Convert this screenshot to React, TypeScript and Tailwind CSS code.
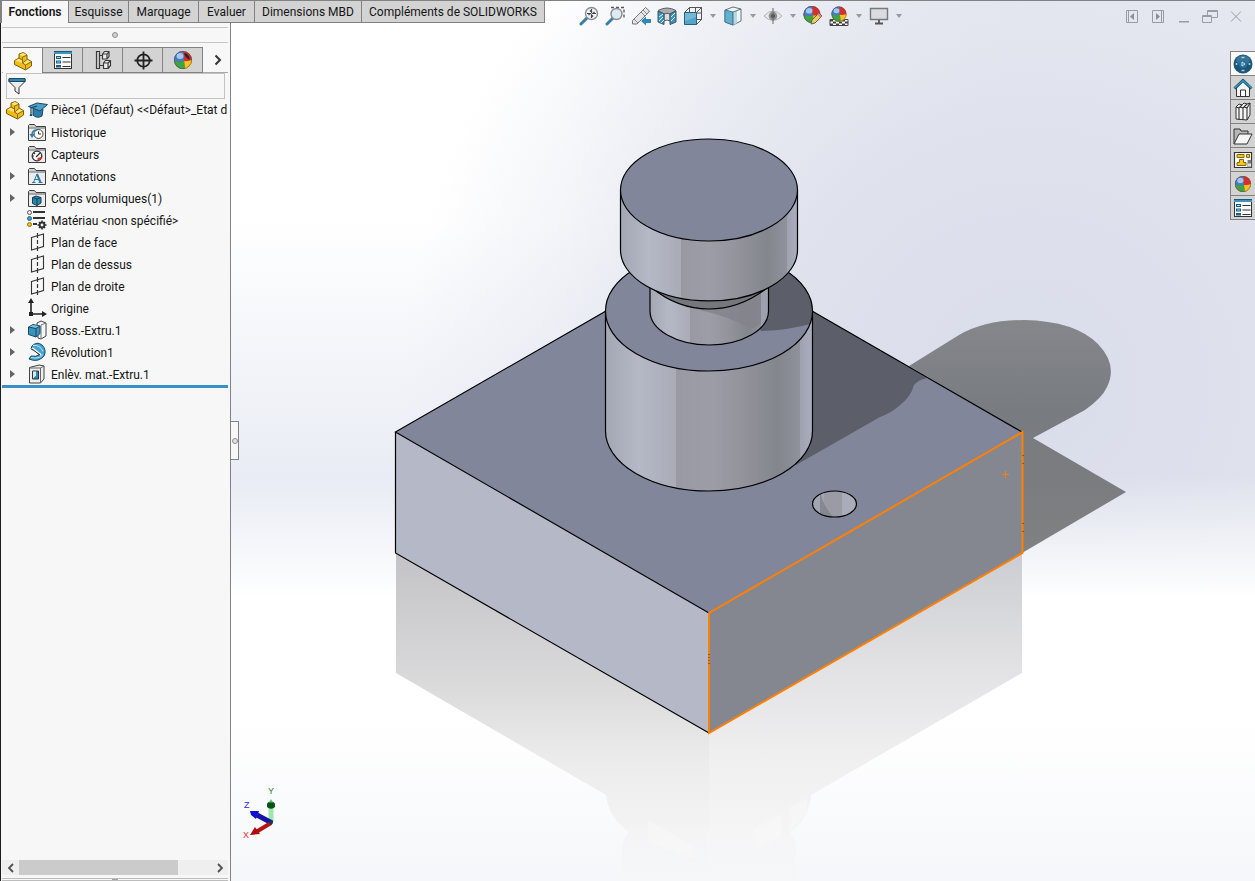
import type { ReactNode } from 'react';

/* ---------- icons ---------- */

function Svg({ size = 20, children }: { size?: number; children: ReactNode }) {
  return (
    <svg width={size} height={size} viewBox="0 0 20 20" fill="none" aria-hidden="true" className="block shrink-0">
      {children}
    </svg>
  );
}

const PartIcon = () => (
  <Svg>
    <path d="M1.500 9.500 6 7V3l4.500-1.500L14 4v4l4.500 2.500V15L12.500 19 1.500 13.500z" fill="#f0bb17" stroke="#7d5f0a" strokeLinejoin="round" />
    <path d="M6.500 3.300 10.500 2l3 2L9.500 5.800zM2.300 9.600 6 7.800l3.500 1.700v2.800zM10 11.800l4-3 4 2-5.500 3z" fill="#ffe371" />
    <path d="M9.500 6v6l3 2v4.500M9.500 6 14 4.200M9.500 12 14 8.500M12.500 14l6-3.300M6 7l3.500 2" stroke="#8b6a10" />
  </Svg>
);

const ListIcon = () => (
  <Svg>
    <rect x="1.500" y="1.500" width="17" height="17" fill="#fafafa" stroke="#333" />
    <path d="M1 1h18v3H1z" fill="#3b94bd" />
    <path d="M1 1.500h18" stroke="#1c5878" />
    <path d="M3 6h5v3H3zM3 10.500h5v3H3zM3 15h5v2.500H3z" fill="#175f85" />
    <path d="M4 7.500h3M4 12h3" stroke="#9fd6ee" />
    <path d="M9.500 7.500h8M9.500 12h8M9.500 16.500h8" stroke="#333" strokeWidth="1.200" />
  </Svg>
);

const ConfigIcon = () => (
  <Svg>
    <path d="M3.500 1.500h3v17h-3zM7 5.500h3M7 15.500h3" stroke="#3a3a3a" strokeWidth="1.200" />
    <path d="M9.500 4l2-2.500h4.500v5L14 9H9.500zM9.500 4H14v5M14 4l2-2.500M10.500 13l2-2.500h5v5L15 18.500h-4.500zM10.500 13H15v5.500M15 13l2.500-2.500" fill="#eee" stroke="#3a3a3a" strokeWidth="1.200" strokeLinejoin="round" />
  </Svg>
);

const TargetIcon = () => (
  <Svg>
    <circle cx="10.500" cy="10.500" r="6.200" stroke="#222" strokeWidth="1.800" />
    <path d="M10.500 1.500v18M1.500 10.500h18" stroke="#222" strokeWidth="1.800" />
  </Svg>
);

function Ball({ cx = 10, cy = 10, r = 9 }: { cx?: number; cy?: number; r?: number }) {
  const k = r / 9;
  return (
    <g transform={`translate(${cx} ${cy}) scale(${k})`}>
      <circle r="9" fill="#d92f2a" />
      <path d="M0-9A9 9 0 0 0-9 1Q-4 2 1 1Q1-5 0-9z" fill="#3f7fd0" />
      <path d="M-9 1A9 9 0 0 0 2 8.800Q2 4 1 1Q-4 2-9 1z" fill="#3fa544" />
      <path d="M2 8.800A9 9 0 0 0 9 0Q5 1.500 1 1Q2 4 2 8.800z" fill="#f2c522" />
      <ellipse cx="-3" cy="-4" rx="3.500" ry="3" fill="#fff" opacity=".55" />
      <circle r="8.600" stroke="#444" strokeWidth=".8" fill="none" opacity=".6" />
    </g>
  );
}

const AppearanceIcon = () => (
  <Svg>
    <Ball />
    <path d="M11 3q5 0 6 7-5-2-6-7z" fill="#26262b" />
  </Svg>
);
const BallIcon = () => (
  <Svg>
    <Ball r={8} />
  </Svg>
);

const FilterIcon = () => (
  <Svg>
    <path d="M2 3h16v2.500l-6 6V18l-4-3v-3.500l-6-6z" fill="#ececec" stroke="#333" strokeLinejoin="round" />
    <path d="M2 2.500h16v3H2z" fill="#2a8ab5" stroke="#1c4a60" />
  </Svg>
);

const CapIcon = () => (
  <Svg>
    <path d="M5 9v6q4 4 9 1l1-7" fill="#2f7ea8" stroke="#174a66" />
    <path d="M.5 6.500 9 3l10.500 1.500L12 11z" fill="#4d9dc4" stroke="#174a66" strokeLinejoin="round" />
    <path d="M9 6 3 8v5" stroke="#174a66" strokeWidth="1.200" />
    <path d="M3 12l-1.500 4h3z" fill="#174a66" />
  </Svg>
);

function Folder({ children }: { children: ReactNode }) {
  return (
    <Svg>
      <path d="M1.500 18.500v-15l1-1h5l1.500 2h9.500v14z" fill="#d2d2d2" stroke="#3d3d3d" />
      <path d="M2 6.500h16v11.500H2z" fill="#ececec" />
      <path d="M2 6h16.500" stroke="#777" />
      {children}
    </Svg>
  );
}
const HistoryIcon = () => (
  <Folder>
    <circle cx="11.500" cy="12" r="4.500" stroke="#444" fill="#fff" />
    <path d="M11.500 9.500V12H14" stroke="#333" />
    <path d="M5 13q0-5 5-5" stroke="#2582ad" strokeWidth="1.600" />
    <path d="M2.500 12h5.500l-3 4z" fill="#2582ad" />
  </Folder>
);
const SensorIcon = () => (
  <Folder>
    <circle cx="10" cy="12" r="4.800" stroke="#333" strokeWidth="1.300" fill="#fff" />
    <path d="M14.500 13a5 5 0 0 1-4 4l0-3z" fill="#d93320" />
    <path d="M9 13l4-4M7 9l1 1M6 12h1" stroke="#333" strokeWidth="1.200" />
  </Folder>
);
const AnnotationIcon = () => (
  <Folder>
    <path d="M6.500 16.500 10 8" stroke="#2b7ca5" />
    <path d="M10 8l3.500 8.500" stroke="#2b7ca5" strokeWidth="2" />
    <path d="M7.500 13.500h4.500M5 16.500h3.500M11.500 16.500h4" stroke="#2b7ca5" />
  </Folder>
);
const BodyIcon = () => (
  <Folder>
    <path d="M5.500 9.500 9 8l5 1.500v5.500L10 17.500l-4.500-2z" fill="#2b86af" stroke="#123f57" strokeLinejoin="round" />
    <path d="M5.500 9.500 10 11l4-1.500M10 11v6.500" stroke="#123f57" />
  </Folder>
);
const MaterialIcon = () => (
  <Svg>
    <path d="M6 2h12M6 8h12M6 14h4" stroke="#333" strokeWidth="2" />
    <circle cx="2.500" cy="2.500" r="2" fill="#eee" stroke="#555" />
    <circle cx="2.500" cy="8.500" r="2" fill="#3ba0cf" stroke="#2a6584" />
    <circle cx="2.500" cy="14.500" r="2" fill="#f5c21c" stroke="#8e6f10" />
    <path d="M15 10.500v9M10.500 15h9M12 12l6 6M18 12l-6 6" stroke="#333" strokeWidth="1.600" />
    <circle cx="15" cy="15" r="2.400" fill="#f7f7f7" stroke="#333" strokeWidth="2" />
  </Svg>
);
const PlaneIcon = () => (
  <Svg>
    <path d="M4.500 5.500 16.500 2v12.500L4.500 18z" stroke="#333" strokeWidth="1.100" />
    <path d="M10.500 1v5M10.500 8v4M10.500 14v5" stroke="#333" strokeWidth="1.200" />
  </Svg>
);
const OriginIcon = () => (
  <Svg>
    <path d="M4 16V3M4 16h12" stroke="#222" strokeWidth="1.600" />
    <path d="M4 0l3 5H1zM20 16l-5-3v6zM2 14h4v4H2z" fill="#222" />
  </Svg>
);
const BossIcon = () => (
  <Svg>
    <path d="M10 3l4-2 5 2v13l-5 3-3-1z" fill="#f5f5f5" stroke="#444" strokeLinejoin="round" />
    <path d="M14 5v14M14 5l5-2" stroke="#777" />
    <path d="M1.500 7 6 4.500l7 1.500v7.500L9 17l-7.500-2.500z" fill="#3b94bd" stroke="#184a62" strokeLinejoin="round" />
    <path d="M2 7l4-2 6.500 1.200L9 8.500z" fill="#7cc3e0" />
    <path d="M1.500 7 9 8.500 13 6M9 8.500V17" stroke="#184a62" />
  </Svg>
);
const RevolveIcon = () => (
  <Svg>
    <path d="M5 4Q10-1 15 3q5 5 2 11-6 7-15 3l2-3q5 1 8-1-2-4-8-6z" fill="#45a4d0" stroke="#184a62" strokeLinejoin="round" />
    <path d="M6 3.500q7-1 10 6M4 15.500q8 2 12-3" stroke="#b3e3f6" />
    <path d="M5 6l9 7" stroke="#fff" strokeWidth="2" />
    <path d="M5 7l8 6" stroke="#222" />
  </Svg>
);
const CutIcon = () => (
  <Svg>
    <path d="M2.500 3.500 12 1l5 1v13l-3.500 4h-11z" fill="#eee" stroke="#444" strokeLinejoin="round" />
    <path d="M2.500 4h11v15M13.500 4 17 2" stroke="#666" />
    <path d="M5.500 7h6v8h-6z" fill="#2f88b2" stroke="#333" />
    <path d="M6 7.500h3v4L6 14.500z" fill="#cfeefa" />
  </Svg>
);

/* head-up toolbar */
const ZoomFit = () => (
  <Svg>
    <path d="M2 18l6-6" stroke="#3a80a5" strokeWidth="3" strokeLinecap="round" />
    <circle cx="12.500" cy="7.500" r="6" fill="#f1f3f5" stroke="#8a8d92" strokeWidth="1.400" />
    <path d="M12.500 3v3l-1.500-1.500M12.500 12V9l1.500 1.500M8 7.500h3L9.500 9M17 7.500h-3L15.500 6" stroke="#444" strokeWidth="1.200" />
  </Svg>
);
const ZoomArea = () => (
  <Svg>
    <path d="M6 1.500h13v11" stroke="#555" strokeWidth="1.300" strokeDasharray="3 2" />
    <path d="M2 18l6-6" stroke="#3a80a5" strokeWidth="3" strokeLinecap="round" />
    <circle cx="11.500" cy="8" r="5.500" fill="#dceaf1" stroke="#8a8d92" strokeWidth="1.400" />
  </Svg>
);
const PreviousView = () => (
  <Svg>
    <path d="M1.500 14.500 12 4l2.500-2.500L18.500 5 16 8 6 18H1.500z" fill="#e6e6e6" stroke="#777" strokeLinejoin="round" />
    <path d="M3 13l4 4M10 6l4 4M12 4l4 4" stroke="#888" />
    <path d="M10 15l5-4.500V13h5v4h-5v2.500z" fill="#3388b3" />
  </Svg>
);
const SectionView = () => (
  <Svg>
    <path d="M1 4.500q9-5 18 0L13 8q-3-1.500-6 0z" fill="#a9adb1" stroke="#5c6064" />
    <path d="M7 8q3-1.500 6 0v7q-3-2-6 0z" fill="#dcdee0" stroke="#5c6064" />
    <path d="M1 5l6 3v10.500L1 16zM13 8l6-3v11l-6 2.500z" fill="#3b94bd" stroke="#44555f" />
    <path d="M2 11l4-3M2 15l4-4M4 17l3-3M14 11l4-4M14 15l4-4" stroke="#d8f1fb" />
  </Svg>
);
const Orientation = () => (
  <Svg>
    <path d="M1.500 6.500l5-5h12v12l-5 5M6.500 1.500v12h12M12.500 1.500v12M6.500 7h12M13.500 6.500l5-5M13.500 18.500l5-5" stroke="#555" />
    <path d="M1.500 6.500h12v12h-12z" fill="#55a3c7" stroke="#25607d" />
    <path d="M2 7h11v4L2 15z" fill="#8bc5dd" opacity=".6" />
  </Svg>
);
const DisplayStyle = () => (
  <Svg>
    <path d="M2 4l8-3 8 2v12l-8 4-8-3z" fill="#eef6f9" stroke="#647079" strokeLinejoin="round" />
    <path d="M2 4l8 2v13l-8-3z" fill="#62b0d2" stroke="#49798f" />
    <path d="M10 6l4-1.500V17l-4 2z" fill="#b0d9e9" />
    <path d="M10 6l8-3M10 6v13" stroke="#647079" />
  </Svg>
);
const EyeIcon = () => (
  <Svg>
    <path d="M1 10q9-10 18 0-9 9-18 0z" fill="#e9e9ea" stroke="#b0b0b3" />
    <circle cx="10" cy="10" r="4.300" fill="#8c8e92" />
    <circle cx="10" cy="10" r="2" fill="#4d4f52" />
    <path d="M10 2v16" stroke="#666" />
  </Svg>
);
const EditAppearance = () => (
  <Svg>
    <Ball cx={9} cy={8.500} r={8.500} />
    <path d="M8 18l1-4 7-7 3 3-7 7z" fill="#f1cd58" stroke="#5d5d5d" strokeLinejoin="round" />
    <path d="M15 8l3 3" stroke="#e3867e" strokeWidth="2" />
  </Svg>
);
const SceneIcon = () => (
  <Svg>
    <path d="M1 13.500h18v6H1z" fill="#fff" stroke="#444" />
    <path d="M1 13.500h3v2H1zM7 13.500h3v2H7zM13 13.500h3v2h-3zM4 15.500h3v2H4zM10 15.500h3v2h-3zM16 15.500h3v2h-3zM1 17.500h3v2H1zM7 17.500h3v2H7zM13 17.500h3v2h-3z" fill="#444" />
    <Ball cy={8} r={7.500} />
  </Svg>
);
const MonitorIcon = () => (
  <Svg>
    <path d="M1.500 2.500h17v11h-17z" fill="#d9dbdf" stroke="#75787c" strokeWidth="1.400" />
    <path d="M10 14v3M6 17.500h8" stroke="#555" strokeWidth="1.800" />
  </Svg>
);

/* task pane */
const ResourcesIcon = () => (
  <Svg>
    <circle cx="10" cy="10" r="9.500" fill="#1b5578" />
    <ellipse cx="10" cy="6" rx="7" ry="4.500" fill="#4b87aa" opacity=".6" />
    <circle cx="10" cy="10" r="4" fill="#2d7099" />
    <path d="M9 8l3 2-3 2z" stroke="#b8e0f4" />
    <path d="M8.500 3.500h3M3.500 9v2M16.500 9v2M8.500 16.500h3" stroke="#a9cee0" strokeWidth="1.600" />
  </Svg>
);
const HomeIcon = () => (
  <Svg>
    <path d="M3.500 9v9.500h13V9L10 3z" fill="#f4f4f4" stroke="#333" />
    <path d="M7.500 18v-6h5v6" fill="#fff" stroke="#333" />
    <path d="M1.500 10.500 10 2.500l8.500 8" stroke="#14516f" strokeWidth="3" />
    <path d="M1.500 10 10 2.500l8.500 7.500" stroke="#3a9bc7" strokeWidth="1.200" />
  </Svg>
);
const LibraryIcon = () => (
  <Svg>
    <path d="M3 5l3-3 3 1 2-2 3 1 3-1v12l-3 5-11-1z" fill="#f5f5f5" stroke="#333" strokeLinejoin="round" />
    <path d="M3 5l3 1v12M6 6l3-3M7 5l3 1v12M10 6l4-4M11 5l3 1v12M14 6l3-5" stroke="#333" strokeWidth="1.100" />
  </Svg>
);
const OpenFolderIcon = () => (
  <Svg>
    <path d="M1 18V3h6l1 2h7v3" fill="#b7b7b7" stroke="#333" />
    <path d="M1 18 6 8h13l-5 10z" fill="#f5f5f5" stroke="#333" strokeLinejoin="round" />
  </Svg>
);
const PaletteIcon = () => (
  <Svg>
    <path d="M1.500 2.500h17v15h-17z" fill="#fff" stroke="#333" strokeWidth="1.200" />
    <path d="M4 4.500h7v3H4zM13.500 4.500h3v3h-3zM6.500 9.500h4v3H13v3H4v-3h2.500z" fill="#f4c726" stroke="#86660a" />
    <path d="M14.500 10v7.500h4V10z" fill="#777" />
    <path d="M15 13.500h3v3h-3z" fill="#ddd" />
  </Svg>
);

const Caret = () => <span className="h-0 w-0 border-x-[3px] border-t-[4px] border-x-transparent border-t-[#97999d]" />;

/* ---------- data ---------- */

const commandTabs = [
  { label: 'Fonctions', width: 'w-[67px]' },
  { label: 'Esquisse', width: 'w-[60px]' },
  { label: 'Marquage', width: 'w-[70px]' },
  { label: 'Evaluer', width: 'w-[56px]' },
  { label: 'Dimensions MBD', width: 'w-[107px]' },
  { label: 'Compléments de SOLIDWORKS', width: 'w-[183px]' },
];

const managerTabs = [
  { label: 'Arbre de création', icon: <PartIcon /> },
  { label: 'Propriétés', icon: <ListIcon /> },
  { label: 'Configurations', icon: <ConfigIcon /> },
  { label: 'DimXpert', icon: <TargetIcon /> },
  { label: 'Affichage', icon: <AppearanceIcon /> },
];

const tree = [
  { label: 'Historique', icon: <HistoryIcon />, open: true },
  { label: 'Capteurs', icon: <SensorIcon />, open: false },
  { label: 'Annotations', icon: <AnnotationIcon />, open: true },
  { label: 'Corps volumiques(1)', icon: <BodyIcon />, open: true },
  { label: 'Matériau <non spécifié>', icon: <MaterialIcon />, open: false },
  { label: 'Plan de face', icon: <PlaneIcon />, open: false },
  { label: 'Plan de dessus', icon: <PlaneIcon />, open: false },
  { label: 'Plan de droite', icon: <PlaneIcon />, open: false },
  { label: 'Origine', icon: <OriginIcon />, open: false },
  { label: 'Boss.-Extru.1', icon: <BossIcon />, open: true },
  { label: 'Révolution1', icon: <RevolveIcon />, open: true },
  { label: 'Enlèv. mat.-Extru.1', icon: <CutIcon />, open: true },
];

const viewTools = [
  { label: 'Zoom au mieux', icon: <ZoomFit />, menu: false },
  { label: 'Zoom fenêtre', icon: <ZoomArea />, menu: false },
  { label: 'Vue précédente', icon: <PreviousView />, menu: false },
  { label: 'Vue en coupe', icon: <SectionView />, menu: false },
  { label: 'Orientation', icon: <Orientation />, menu: true },
  { label: "Style d'affichage", icon: <DisplayStyle />, menu: true },
  { label: 'Cacher/Montrer', icon: <EyeIcon />, menu: true },
  { label: 'Modifier apparence', icon: <EditAppearance />, menu: false },
  { label: 'Appliquer scène', icon: <SceneIcon />, menu: true },
  { label: "Paramètres d'affichage", icon: <MonitorIcon />, menu: true },
];

const windowControls = [
  { label: 'Volet gauche', path: 'M.5 0.500h11v12H.5zM2.500.5v12', fill: 'M8 3 4 6.500 8 10z' },
  { label: 'Volet droit', path: 'M.5 0.500h11v12H.5zM9.500.5v12', fill: 'M4 3l4 3.500L4 10z' },
  { label: 'Réduire', path: 'M1 11.500h10M1 12h10', fill: '' },
  { label: 'Restaurer', path: 'M-1.500 5.500h9v7h-9zM3.500 5V.5h10v7H8M-1.500 6.500h9M3.500 1.500h10', fill: '' },
  { label: 'Fermer', path: 'M1 1.500l10 10M11 1.500l-10 10', fill: '' },
];

const taskTabs = [
  { label: 'Ressources', icon: <ResourcesIcon /> },
  { label: 'Accueil', icon: <HomeIcon /> },
  { label: 'Bibliothèque', icon: <LibraryIcon /> },
  { label: 'Explorateur', icon: <OpenFolderIcon /> },
  { label: 'Palette de vues', icon: <PaletteIcon /> },
  { label: 'Apparences', icon: <BallIcon /> },
  { label: 'Propriétés personnalisées', icon: <ListIcon /> },
];

/* ---------- model ---------- */

function Model() {
  return (
    <svg
      viewBox="231 23 1024 858"
      preserveAspectRatio="xMinYMin slice"
      className="block h-full w-full"
      role="img"
      aria-label="Pièce1"
    >
      <defs>
        <linearGradient id="side">
          <stop offset="0" stopColor="#a3a7b4" />
          <stop offset=".16" stopColor="#b5b9c6" />
          <stop offset=".34" stopColor="#a9acb7" />
          <stop offset=".341" stopColor="#9899a2" />
          <stop offset=".5" stopColor="#9c9da7" />
          <stop offset=".65" stopColor="#93949c" />
          <stop offset=".83" stopColor="#84868e" />
          <stop offset=".939" stopColor="#8f919b" />
          <stop offset=".94" stopColor="#9fa3b0" />
          <stop offset="1" stopColor="#a9adbd" />
        </linearGradient>
        <linearGradient id="reflL" x1="0" y1="553" x2="0" y2="881" gradientUnits="userSpaceOnUse">
          <stop offset="0" stopColor="#c3c3c7" />
          <stop offset=".4" stopColor="#dadadb" />
          <stop offset=".62" stopColor="#ebebeb" />
          <stop offset=".85" stopColor="#f4f4f5" />
          <stop offset="1" stopColor="#f6f7f9" />
        </linearGradient>
        <linearGradient id="reflR" x1="0" y1="553" x2="0" y2="881" gradientUnits="userSpaceOnUse">
          <stop offset="0" stopColor="#cccdd2" />
          <stop offset=".35" stopColor="#e2e2e4" />
          <stop offset=".62" stopColor="#efeff0" />
          <stop offset=".85" stopColor="#f5f5f6" />
          <stop offset="1" stopColor="#f6f7f9" />
        </linearGradient>
        <linearGradient id="shade" x1="0" y1="320" x2="0" y2="552" gradientUnits="userSpaceOnUse">
          <stop offset="0" stopColor="#85878b" />
          <stop offset=".4" stopColor="#787b80" />
          <stop offset=".7" stopColor="#7b7c7f" />
          <stop offset="1" stopColor="#808183" />
        </linearGradient>
        <clipPath id="ring">
          <ellipse cx="709" cy="311" rx="103.500" ry="60" />
        </clipPath>
        <clipPath id="neck">
          <path d="M650 270v41a59.250 34 0 0 0 118.500 0v-41z" />
        </clipPath>
        <clipPath id="hole">
          <ellipse cx="834.500" cy="504" rx="22" ry="13" />
        </clipPath>
      </defs>

      {/* floor reflection */}
      <path d="M396 553v120l210 122q3 24 23 37-7 8-7 18v31h87V733z" fill="url(#reflL)" />
      <path d="M1022 553v120L811 795q-2 24-21 37 6 8 6 18v31h-87V733z" fill="url(#reflR)" />
      <path d="M648 820l47 27v12l-47-17zM754 829l27-15v22l-27 15zM790 807l17-9v15l-17 18z" fill="#fafafb" opacity=".4" />

      {/* cast shadow */}
      <path
        d="M909 366l50-31q26-15 65-15 51 1 74 24 20 21 9 43-5 11-22 23l-52 28 93 54-104 61V432z"
        fill="url(#shade)"
      />

      {/* base */}
      <path d="M396 432 709 251l313 181-313 181z" fill="#82869a" />
      <path d="M396 432l313 181v120L396 553z" fill="#b5b9c7" />
      <path d="M709 613l313-181v121L709 733z" fill="#858790" />
      <path d="M750 275l177 103q-9 2-13 7-3 12-15 21-8 7-19 11l-84 48-46-20z" fill="#5c5f6a" />
      <path d="M606 311 395.500 432 709 613M812 311l210 121M395.500 432v121L709 733" fill="none" stroke="#000" strokeWidth="1.200" />

      {/* hole */}
      <g clipPath="url(#hole)">
        <path d="M812 490h44v28h-44z" fill="#9a9ba5" />
        <path d="M812 490h12v30h-12z" fill="#a2a6b2" />
        <path d="M820 491q3 15 14 27h-14z" fill="#80828b" opacity=".8" />
        <path d="M842 490h15v28h-15z" fill="#a9adba" />
      </g>
      <ellipse cx="834.500" cy="504" rx="22" ry="13" fill="none" stroke="#000" strokeWidth="1.200" />

      {/* lower cylinder */}
      <path d="M605.500 311v120a103.500 60 0 0 0 207 0V311z" fill="url(#side)" stroke="#000" strokeWidth="1.200" />
      <ellipse cx="709" cy="311" rx="103.500" ry="60" fill="#82869a" />
      <path d="M700 240h120v81q-26 9-59 10l-30-60z" fill="#5c5f6a" clipPath="url(#ring)" />
      <ellipse cx="709" cy="311" rx="103.500" ry="60" fill="none" stroke="#000" strokeWidth="1.200" />

      {/* neck */}
      <path d="M650 270v41a59.250 34 0 0 0 118.500 0v-41z" fill="url(#side)" />
      <path d="M696 309q32 7 56 20l20-12v-30h-70z" fill="#82848c" opacity=".85" clipPath="url(#neck)" />
      <path d="M761 280h8v36l-8 8z" fill="#9da1ae" clipPath="url(#neck)" />
      <path d="M650 270v41a59.250 34 0 0 0 118.500 0v-41" fill="none" stroke="#000" strokeWidth="1.200" />
      <path d="M652 288q26 21 57 21t58-21z" fill="#75777c" stroke="#000" strokeWidth="1.200" />

      {/* head */}
      <path d="M620.500 190v60a88.500 51 0 0 0 177 0v-60z" fill="url(#side)" stroke="#000" strokeWidth="1.200" />
      <ellipse cx="709" cy="190" rx="88.500" ry="51" fill="#82869a" stroke="#000" strokeWidth="1.200" />

      {/* selected face */}
      <path d="M709 613l313.500-181v121L709 733z" fill="none" stroke="#ff8000" strokeWidth="2" />
      <path d="M1002 474.500h7M1005.500 471v7" stroke="#ff8000" />
      <path d="M708 654.500h2M708 657.500h2M708 660.500h2M708 663.500h2M1022 455.500h2M1022 463.500h2M1022 523.500h2M1022 531.500h2" stroke="#8c5a26" />

      {/* triad */}
      <path d="M271 822v-18" stroke="#9ee8ad" strokeWidth="5" />
      <ellipse cx="271" cy="805" rx="4" ry="3.500" fill="#0a5312" />
      <path d="M271 799l3 6h-6z" fill="#51ba61" />
      <ellipse cx="271" cy="805.500" rx="4" ry="3" fill="#0a5312" />
      <path d="M272 823l-15-8" stroke="#1414a8" strokeWidth="5" />
      <path d="M250 811l9 0-3 8-5-4z" fill="#1111d1" />
      <path d="M271 823l-15 9" stroke="#b51414" strokeWidth="4" />
      <path d="M250 835l5-8 5 7z" fill="#b20b0b" />
      <circle cx="271" cy="822.500" r="2" fill="#173a4c" />
      <g className="font-['Liberation_Sans'] text-[9px]">
        <text x="268" y="794" fill="#1b831f">Y</text>
        <text x="244" y="808" fill="#2a2ae0">Z</text>
        <text x="243" y="838" fill="#ee2f2f">X</text>
      </g>
    </svg>
  );
}

/* ---------- page ---------- */

function CommandBar() {
  return (
    <header className="flex h-[23px] shrink-0 border-t border-[#828282]">
      <nav className="flex shrink-0 border-l-2 border-[#828282]">
        {commandTabs.map((t, i) => (
          <button
            key={t.label}
            className={`${t.width} h-[22px] shrink-0 whitespace-nowrap border-r border-[#828282] text-center ${
              i === 0 ? 'bg-[#f7f7f7] font-semibold' : 'border-b bg-[#d3d3d3]'
            }`}
          >
            {t.label}
          </button>
        ))}
      </nav>
      <div className="flex flex-1 items-start justify-between pl-[34px] pr-[13px] pt-[5px]">
        <div className="flex gap-[6px]">
          {viewTools.map((t) => (
            <button key={t.label} aria-label={t.label} className="flex items-center gap-[6px]">
              {t.icon}
              {t.menu && <span className="flex w-2 justify-center"><Caret /></span>}
            </button>
          ))}
        </div>
        <div className="flex gap-[14px] pt-1">
          {windowControls.map((c) => (
            <button key={c.label} aria-label={c.label}>
              <svg width="12" height="13" viewBox="0 0 12 13" fill="none" className="block overflow-visible">
                <path d={c.path} stroke="#9b9ca0" />
                <path d={c.fill} fill="#8d8e92" />
              </svg>
            </button>
          ))}
        </div>
      </div>
    </header>
  );
}

function FeatureManager() {
  return (
    <aside className="flex w-[231px] shrink-0 flex-col border-l border-r border-l-[#1c1c1c] border-r-[#828282] bg-[#f7f7f7] pl-px pr-[2px]">
      <div className="mt-1 flex h-4 shrink-0 items-center justify-center border-y border-[#c6c6c6]">
        <span className="h-[6px] w-[6px] rounded-full border border-[#909090] bg-[#d0d0d0]" />
      </div>
      <div className="mt-1 flex h-[26px] shrink-0 border-b border-[#a8a8a8] pl-px">
        {managerTabs.map((t, i) => (
          <button
            key={t.label}
            aria-label={t.label}
            className={`flex h-[26px] w-10 items-center justify-center border-r border-t border-[#828282] ${
              i === 0 ? 'bg-[#f9f9f9]' : 'border-b bg-[#d3d3d3]'
            }`}
          >
            {t.icon}
          </button>
        ))}
        <button aria-label="Plus d'onglets" className="flex flex-1 items-center justify-center pl-1">
          <svg width="8" height="12" viewBox="0 0 8 12" fill="none" stroke="#333" strokeWidth="2">
            <path d="M1.500 1.500 6 6l-4.500 4.500" />
          </svg>
        </button>
      </div>
      <label className="ml-1 mr-[3px] flex h-[26px] shrink-0 items-center border border-[#c2c2c2]">
        <FilterIcon />
        <input aria-label="Filtre" className="min-w-0 flex-1 bg-transparent outline-none" />
      </label>
      <div className="flex h-[22px] shrink-0 items-center gap-[3px] overflow-hidden whitespace-nowrap pl-[3px]">
        <PartIcon />
        <CapIcon />
        <span>Pièce1 (Défaut) &lt;&lt;Défaut&gt;_Etat d</span>
      </div>
      <ul className="shrink-0">
        {tree.map((n) => (
          <li key={n.label} className="flex h-[22px] items-center whitespace-nowrap pl-2">
            <span className="w-[17px]">
              {n.open && (
                <button aria-label={`Développer ${n.label}`} className="block h-0 w-0 border-y-4 border-l-[5px] border-y-transparent border-l-[#646464]" />
              )}
            </span>
            {n.icon}
            <span className="ml-1 pt-px">{n.label}</span>
          </li>
        ))}
      </ul>
      <div className="h-[3px] shrink-0 bg-[#3b8fc7]" />
      <div className="flex-1" />
      <div className="flex h-[15px] shrink-0 items-center bg-[#efefef]">
        <button aria-label="Défiler à gauche" className="flex w-[17px] justify-center">
          <svg width="6" height="10" viewBox="0 0 6 10" fill="none" stroke="#505050" strokeWidth="1.800">
            <path d="M5 1 1 5l4 4" />
          </svg>
        </button>
        <div className="h-full flex-1">
          <div className="h-full w-[83%] bg-[#cbcbcb]" />
        </div>
        <button aria-label="Défiler à droite" className="flex w-[17px] justify-center">
          <svg width="6" height="10" viewBox="0 0 6 10" fill="none" stroke="#505050" strokeWidth="1.800">
            <path d="M1 1l4 4-4 4" />
          </svg>
        </button>
      </div>
      <div className="mt-[3px] flex h-[3px] shrink-0 justify-center border-y border-[#bcbcbc]">
        <span className="w-[6px] bg-[#a0a0a0]" />
      </div>
    </aside>
  );
}

export default function App() {
  return (
    <div className="flex h-screen flex-col overflow-hidden bg-white bg-[linear-gradient(to_bottom,transparent_0,transparent_54%,#fff_68%,#fff_82%,#f6f7fa_100%),radial-gradient(ellipse_50%_70%_at_82%_44%,#d9ddea_0%,#dfe2ed_40%,transparent_100%),linear-gradient(to_right,transparent_45%,#ecedf3_80%),linear-gradient(to_bottom,#fff_25%,#e8ebf4_56%)] font-[Roboto,'Open_Sans',sans-serif] text-[12px] leading-5 text-[#151515]">
      <CommandBar />
      <div className="flex min-h-0 flex-1">
        <FeatureManager />
        <main className="relative min-w-0 flex-1">
          <Model />
          <button
            aria-label="Replier le volet"
            className="absolute left-0 top-[398px] flex h-[39px] w-2 items-center justify-center border border-l-0 border-[#828282] bg-[#f7f7f7]"
          >
            <span className="h-[6px] w-[6px] rounded-full border border-[#909090] bg-[#e0e0e0]" />
          </button>
          <nav className="absolute right-0 top-7 flex w-[25px] flex-col border-l border-t border-[#828282]">
            {taskTabs.map((t, i) => (
              <button
                key={t.label}
                aria-label={t.label}
                className={`flex h-6 items-center justify-center border-b border-[#828282] ${i === 0 ? 'bg-[#fafafa]' : 'bg-[#d3d3d3]'}`}
              >
                {t.icon}
              </button>
            ))}
          </nav>
        </main>
      </div>
    </div>
  );
}
